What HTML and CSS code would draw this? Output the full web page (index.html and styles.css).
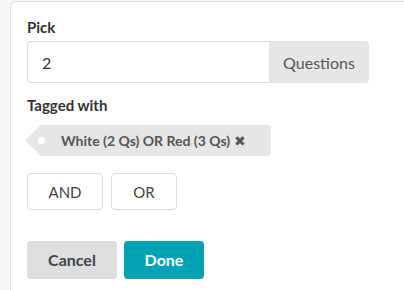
FILE: index.html
```html
<!DOCTYPE html>
<html lang="en">
	<head>
		<meta charset="UTF-8" />
		<meta name="viewport" content="width=device-width, initial-scale=1.0" />
		<title>Pick Questions</title>
		<link rel="stylesheet" href="styles.css">
	</head>
	<body>
		<div class="panel">
			<label class="field-label" for="count">Pick</label>
			<div class="input-group">
				<input type="text" id="count" class="count-input" value="2">
				<span class="addon">Questions</span>
			</div>

			<div class="field-label tagged">Tagged with</div>
			<div class="tags">
				<span class="tag">White (2 Qs) OR Red (3 Qs) <span class="tag-remove">&#x2716;</span></span>
			</div>

			<div class="logic-buttons">
				<button class="btn-outline btn-and">AND</button>
				<button class="btn-outline btn-or">OR</button>
			</div>

			<div class="actions">
				<button class="btn btn-cancel">Cancel</button>
				<button class="btn btn-done">Done</button>
			</div>
		</div>
	</body>
</html>
```

FILE: styles.css
```css
html, body {
	margin: 0;
	height: 100%;
	overflow: hidden;
}

body {
	font-family: "Lato", "Liberation Sans", sans-serif;
	background-color: #f7f7f7;
	color: #333;
}

.panel {
	margin: 1px 0 0 10px;
	height: 289px;
	background-color: #fff;
	border: 1px solid #dcdcdc;
	border-right: none;
	border-bottom: none;
	border-radius: 6px 0 0 0;
	padding: 15px 16px;
	box-sizing: border-box;
}

.field-label {
	display: block;
	font-weight: bold;
	font-size: 15px;
	line-height: 20px;
	color: #333;
	margin-bottom: 4px;
}

.input-group {
	display: flex;
	width: 342px;
	height: 42px;
}

.count-input {
	width: 242px;
	box-sizing: border-box;
	border: 1px solid #dcdcdc;
	border-right: none;
	border-radius: 4px 0 0 4px;
	padding: 0 14px;
	font-family: inherit;
	font-size: 16px;
	color: #333;
	outline: none;
}

.addon {
	width: 100px;
	display: flex;
	align-items: center;
	justify-content: center;
	background-color: #e6e6e6;
	border-radius: 0 4px 4px 0;
	font-size: 16px;
	color: #555;
}

.tagged {
	margin-top: 12px;
	margin-bottom: 10px;
}

.tags {
	display: flex;
	margin-left: -2px;
}

.tag {
	position: relative;
	display: inline-flex;
	align-items: center;
	height: 31px;
	padding: 0 25px 0 36px;
	background-color: #e6e6e6;
	border-radius: 0 4px 4px 0;
	clip-path: polygon(16px 0, 100% 0, 100% 100%, 16px 100%, 0 50%);
	font-weight: bold;
	font-size: 14px;
	color: #555;
}

.tag::before {
	content: "";
	position: absolute;
	left: 13px;
	top: 12px;
	width: 7px;
	height: 7px;
	border-radius: 50%;
	background-color: #fff;
}

.tag-remove {
	font-family: "DejaVu Sans", sans-serif;
	font-size: 14px;
	margin-left: 4px;
	color: #555;
}

.logic-buttons {
	display: flex;
	gap: 8px;
	margin-top: 17px;
}

.btn-outline {
	height: 37px;
	background-color: #fff;
	border: 1px solid #dcdcdc;
	border-radius: 4px;
	font-family: inherit;
	font-size: 15px;
	color: #444;
	padding: 0;
}

.btn-and {
	width: 76px;
}

.btn-or {
	width: 66px;
}

.actions {
	display: flex;
	gap: 7px;
	margin-top: 31px;
}

.btn {
	height: 38px;
	border: none;
	border-radius: 4px;
	font-family: inherit;
	font-weight: bold;
	font-size: 16px;
	padding: 0 0 2px;
}

.btn-cancel {
	width: 90px;
	background-color: #dddee0;
	color: #444;
}

.btn-done {
	width: 80px;
	background-color: #00a2b5;
	color: #fff;
}
```
